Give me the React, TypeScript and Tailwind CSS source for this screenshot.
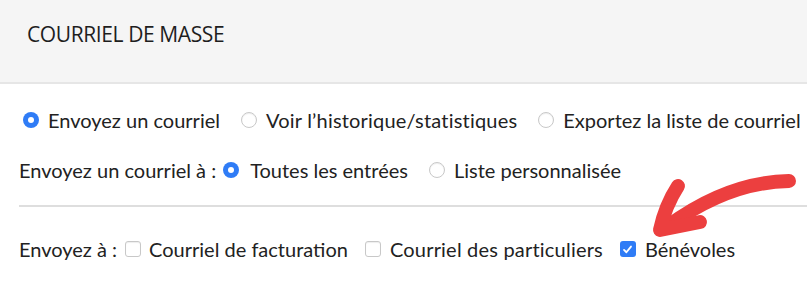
function Radio({ checked }: { checked?: boolean }) {
  return checked ? (
    <span className="flex h-[16px] w-[16px] shrink-0 items-center justify-center rounded-full bg-[#2f7cf6]">
      <span className="h-[6px] w-[6px] rounded-full bg-white" />
    </span>
  ) : (
    <span className="h-[16px] w-[16px] shrink-0 rounded-full border border-[#c8c8c8] bg-white shadow-[inset_0_1px_1px_rgba(0,0,0,0.07)]" />
  );
}

function Check({ checked }: { checked?: boolean }) {
  return checked ? (
    <span className="flex h-[16px] w-[16px] shrink-0 items-center justify-center rounded-[3px] bg-[#2f7cf6]">
      <svg width="11" height="11" viewBox="0 0 12 12" fill="none">
        <path d="M2.2 6.4 L4.8 9 L9.8 2.8" stroke="white" strokeWidth="2" strokeLinecap="round" strokeLinejoin="round" />
      </svg>
    </span>
  ) : (
    <span className="h-[16px] w-[16px] shrink-0 rounded-[3px] border border-[#c8c8c8] bg-white shadow-[inset_0_1px_1px_rgba(0,0,0,0.07)]" />
  );
}

function Option({ label, checked, box, className }: { label: string; checked?: boolean; box?: boolean; className?: string }) {
  return (
    <label className="flex items-center gap-[9px]">
      {box ? <Check checked={checked} /> : <Radio checked={checked} />}
      <span className={className}>{label}</span>
    </label>
  );
}

export default function App() {
  return (
    <div className="relative h-[283px] w-[807px] overflow-hidden bg-white font-['Lato',sans-serif] text-[20px] leading-[28px] text-[#222]">
      <div className="h-[84px] border-b-2 border-[#e6e6e6] bg-[#f5f5f5] pl-[27px] pt-[20px]">
        <h1 className="font-['Open_Sans',sans-serif] text-[21px] leading-[28px] tracking-[-0.4px] text-[#1e1e1e]">COURRIEL DE MASSE</h1>
      </div>

      <div className="pl-[19px]">
        <div className="mt-[22px] flex items-center gap-[21px] whitespace-nowrap pl-[4px]">
          <Option label="Envoyez un courriel" checked />
          <Option label="Voir l’historique/statistiques" className="tracking-[0.2px]" />
          <Option label="Exportez la liste de courriel" />
        </div>

        <div className="mt-[22px] flex items-center gap-[21px] whitespace-nowrap">
          <div className="flex items-center gap-[7px]">
            <span>Envoyez un courriel à :</span>
            <Radio checked />
          </div>
          <span className="-ml-[10px]">Toutes les entrées</span>
          <Option label="Liste personnalisée" />
        </div>

        <div className="mt-[21px] border-t-2 border-[#dedede]" />

        <div className="mt-[28px] flex items-center gap-[17px] whitespace-nowrap">
          <div className="flex items-center gap-[8px]">
            <span>Envoyez à :</span>
            <Check />
          </div>
          <span className="-ml-[9px]">Courriel de facturation</span>
          <Option label="Courriel des particuliers" box className="tracking-[0.2px]" />
          <Option label="Bénévoles" box checked />
        </div>
      </div>

      <svg className="absolute left-0 top-0" width="807" height="283" viewBox="0 0 807 283" fill="none">
        <path d="M789 181 Q 728 182 668 226" stroke="#ec3f3f" strokeWidth="14" strokeLinecap="round" />
        <path d="M678 186 Q 665 206 660 230 L 700 222" stroke="#ec3f3f" strokeWidth="14" strokeLinecap="round" strokeLinejoin="round" />
      </svg>
    </div>
  );
}
